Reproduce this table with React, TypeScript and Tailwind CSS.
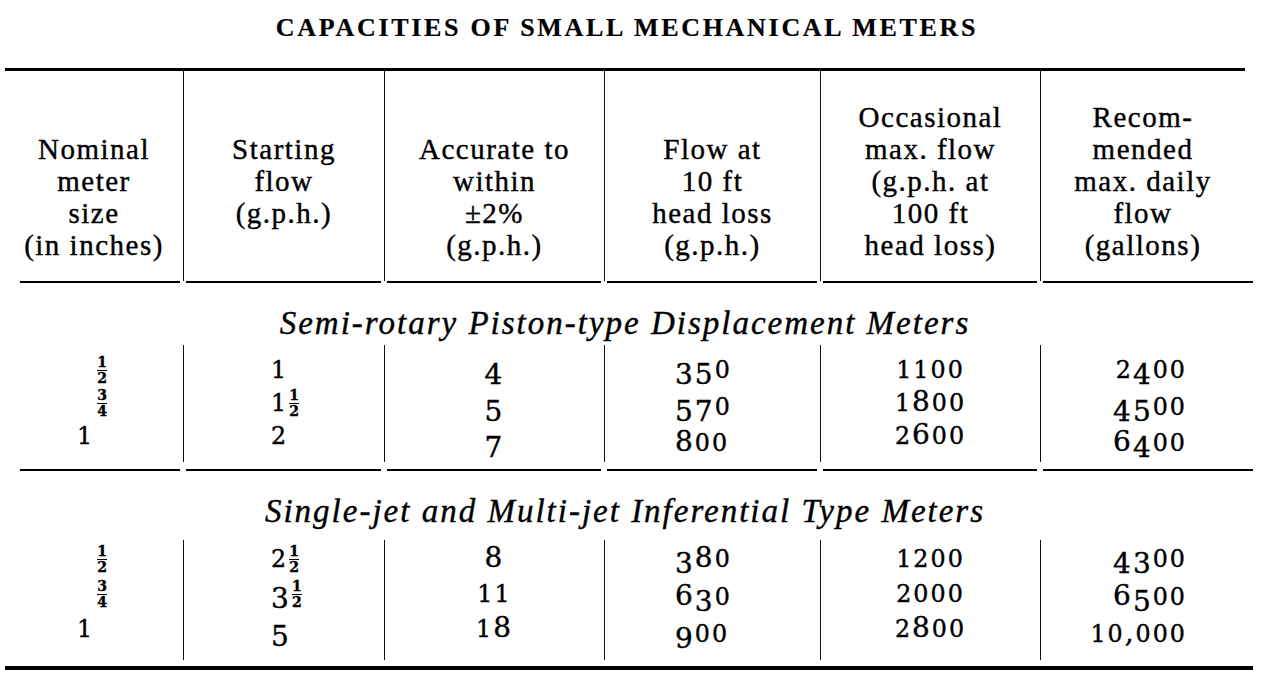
import React from "react";

const W = [178, 201, 220, 216, 220, 205];

function Frac({ n, d }: { n: string; d: string }) {
  return (
    <span className="inline-flex flex-col items-center align-middle text-[14px] leading-[13px] font-bold tracking-normal mx-[1px] [font-family:'DejaVu_Serif',serif]">
      <span>{n}</span>
      <span className="block w-[10px] h-[1.5px] bg-black my-[0.5px]" />
      <span>{d}</span>
    </span>
  );
}

function Num({ s }: { s: string }) {
  return (
    <>
      {s.split("").map((ch, i) => {
        if (/[34579]/.test(ch))
          return (
            <span key={i} className="align-[-0.2em] leading-none">
              {ch}
            </span>
          );
        if (/[012]/.test(ch))
          return (
            <span key={i} className="text-[0.85em] leading-none">
              {ch}
            </span>
          );
        return (
          <span key={i} className="leading-none">
            {ch}
          </span>
        );
      })}
    </>
  );
}

type Cell = React.ReactNode;

function Rule({ h }: { h: string }) {
  return (
    <div className="flex">
      {W.map((w, i) => (
        <div key={i} style={{ width: w }} className="flex">
          <div
            className={`${h} bg-black flex-1 ${i === 0 ? "ml-[15px]" : "ml-[3px]"} ${i === 5 ? "mr-[-8px]" : "mr-[3px]"}`}
          />
        </div>
      ))}
    </div>
  );
}

const headers: string[][] = [
  ["Nominal", "meter", "size", "(in inches)"],
  ["Starting", "flow", "(g.p.h.)", "\u00a0"],
  ["Accurate to", "within", "\u00b12%", "(g.p.h.)"],
  ["Flow at", "10 ft", "head loss", "(g.p.h.)"],
  ["Occasional", "max. flow", "(g.p.h. at", "100 ft", "head loss)"],
  ["Recom-", "mended", "max. daily", "flow", "(gallons)"],
];

const align = [
  "text-left",
  "text-left pl-[87px]",
  "text-center",
  "text-left pl-[70px]",
  "text-center",
  "text-right pr-[58px]",
];

function DataBlock({
  cols,
  lh,
  pt,
  h,
}: {
  cols: Cell[][];
  lh: string;
  pt: string;
  h: string;
}) {
  return (
    <div className={`flex ${h}`}>
      {cols.map((c, i) => (
        <div
          key={i}
          style={{ width: W[i] }}
          className={`${i > 0 ? "border-l-[1.5px] border-[#111]" : ""} ${pt} ${align[i]} text-[28px] tracking-[2px] ${lh}`}
        >
          {c.map((v, j) => (
            <div key={j} className={`${lh} whitespace-nowrap`}>
              {v}
            </div>
          ))}
        </div>
      ))}
    </div>
  );
}

export default function App() {
  const one = (
    <div className="pl-[72px]">
      <Num s="1" />
    </div>
  );
  const half = (
    <div className="pl-[91px]">
      <Frac n="1" d="2" />
    </div>
  );
  const tq = (
    <div className="pl-[91px]">
      <Frac n="3" d="4" />
    </div>
  );
  const sec1: Cell[][] = [
    [half, tq, one],
    [<Num s="1" />, <span><Num s="1" /><Frac n="1" d="2" /></span>, <Num s="2" />],
    [<Num s="4" />, <Num s="5" />, <Num s="7" />],
    [<Num s="350" />, <Num s="570" />, <Num s="800" />],
    [<Num s="1100" />, <Num s="1800" />, <Num s="2600" />],
    [<Num s="2400" />, <Num s="4500" />, <Num s="6400" />],
  ];
  const sec2: Cell[][] = [
    [half, tq, one],
    [
      <span><Num s="2" /><Frac n="1" d="2" /></span>,
      <span><Num s="3" /><Frac n="1" d="2" /></span>,
      <Num s="5" />,
    ],
    [<Num s="8" />, <Num s="11" />, <Num s="18" />],
    [<Num s="380" />, <Num s="630" />, <Num s="900" />],
    [<Num s="1200" />, <Num s="2000" />, <Num s="2800" />],
    [<Num s="4300" />, <Num s="6500" />, <Num s="10,000" />],
  ];
  const serif = { fontFamily: '"Liberation Serif", "Times New Roman", serif' };
  const dejavu = { fontFamily: '"DejaVu Serif", serif' };
  return (
    <div
      className="w-[1276px] h-[686px] bg-white text-black overflow-hidden [-webkit-text-stroke:0.4px_black]"
      style={serif}
    >
      <div className="pt-[11px] pr-[22px] text-center font-bold text-[26px] leading-[34px] tracking-[2.7px] [-webkit-text-stroke:0.2px_black]">
        CAPACITIES OF SMALL MECHANICAL METERS
      </div>
      <div className="ml-[5px] w-[1240px] mt-[23px]">
        <div className="h-[3px] bg-black" />
        <div className="flex h-[210px]">
          {headers.map((lines, i) => (
            <div
              key={i}
              style={{ width: W[i] }}
              className={`${i > 0 ? "border-l-[1.5px] border-[#111]" : ""} flex flex-col justify-end items-center pb-[20px] text-[29px] leading-[32px] tracking-[1.5px]`}
            >
              {lines.map((l, j) => (
                <div key={j} className="whitespace-nowrap">
                  {l}
                </div>
              ))}
            </div>
          ))}
        </div>
        <Rule h="h-[2px]" />
        <div className="h-[62px] pt-[21px] text-center italic text-[33px] leading-[38px] tracking-[2px]">
          Semi-rotary Piston-type Displacement Meters
        </div>
        <div style={dejavu}>
          <DataBlock cols={sec1} lh="leading-[33px]" pt="pt-[7px]" h="h-[117px]" />
        </div>
        <div className="h-[7px]" />
        <Rule h="h-[2px]" />
        <div className="h-[69px] pt-[21px] text-center italic text-[33px] leading-[38px] tracking-[2px]">
          Single-jet and Multi-jet Inferential Type Meters
        </div>
        <div style={dejavu}>
          <DataBlock cols={sec2} lh="leading-[35px]" pt="pt-[0px]" h="h-[120px]" />
        </div>
        <div className="h-[6px]" />
        <div className="h-[3.5px] bg-black mr-[-8px]" />
      </div>
    </div>
  );
}
